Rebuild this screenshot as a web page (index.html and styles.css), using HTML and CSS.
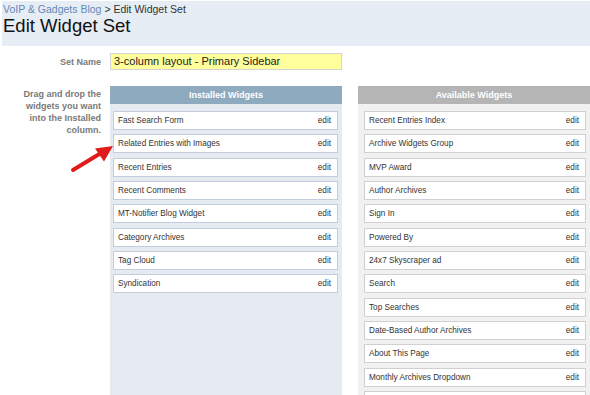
FILE: index.html
```html
<!DOCTYPE html>
<html>
<head>
    <meta charset="UTF-8">
    <title>Edit Widget Set</title>
    <link rel="stylesheet" href="styles.css">
</head>
<body>
    <div class="header">
        <div class="crumbs"><a href="#">VoIP &amp; Gadgets Blog</a> &gt; Edit Widget Set</div>
        <h1>Edit Widget Set</h1>
    </div>

    <div class="form">
        <div class="label">Set Name</div>
        <div class="set-name">3-column layout - Primary Sidebar</div>
        <div></div>

        <div class="label hint">Drag and drop the widgets you want into the Installed column.</div>

        <div class="column installed">
            <div class="column-head">Installed Widgets</div>
            <ul class="widgets">
                <li><span>Fast Search Form</span><a href="#">edit</a></li>
                <li><span>Related Entries with Images</span><a href="#">edit</a></li>
                <li><span>Recent Entries</span><a href="#">edit</a></li>
                <li><span>Recent Comments</span><a href="#">edit</a></li>
                <li><span>MT-Notifier Blog Widget</span><a href="#">edit</a></li>
                <li><span>Category Archives</span><a href="#">edit</a></li>
                <li><span>Tag Cloud</span><a href="#">edit</a></li>
                <li><span>Syndication</span><a href="#">edit</a></li>
            </ul>
        </div>

        <div class="column available">
            <div class="column-head">Available Widgets</div>
            <ul class="widgets">
                <li><span>Recent Entries Index</span><a href="#">edit</a></li>
                <li><span>Archive Widgets Group</span><a href="#">edit</a></li>
                <li><span>MVP Award</span><a href="#">edit</a></li>
                <li><span>Author Archives</span><a href="#">edit</a></li>
                <li><span>Sign In</span><a href="#">edit</a></li>
                <li><span>Powered By</span><a href="#">edit</a></li>
                <li><span>24x7 Skyscraper ad</span><a href="#">edit</a></li>
                <li><span>Search</span><a href="#">edit</a></li>
                <li><span>Top Searches</span><a href="#">edit</a></li>
                <li><span>Date-Based Author Archives</span><a href="#">edit</a></li>
                <li><span>About This Page</span><a href="#">edit</a></li>
                <li><span>Monthly Archives Dropdown</span><a href="#">edit</a></li>
                <li></li>
            </ul>
        </div>
    </div>

    <!-- annotation arrow pointing at the second installed widget -->
    <svg class="arrow" width="60" height="50" viewBox="60 125 60 50">
        <line x1="73" y1="170" x2="101" y2="153" stroke="#e01b1b" stroke-width="4" stroke-linecap="round"/>
        <polygon points="113,146 95,148.5 104,161.5" fill="#e01b1b"/>
    </svg>
</body>
</html>
```

FILE: styles.css
```css
html, body {
    overflow: hidden;
}

body {
    font-family: "Liberation Sans", Arial, sans-serif;
    margin: 0;
    padding-top: 1px;
    position: relative;
    color: #333;
}

.header {
    background: #e7edf5;
    height: 45px;
    margin-left: 2px;
    padding: 2px 0 0 1px;
    box-sizing: border-box;
}

.crumbs {
    font-size: 10.5px;
    line-height: 12px;
    color: #333;
}

.crumbs a {
    color: #5f8ab8;
    text-decoration: none;
}

h1 {
    font-size: 18.5px;
    font-weight: normal;
    color: #111;
    margin: 0;
    line-height: 22px;
}

.form {
    display: grid;
    grid-template-columns: 101px 232px 239px;
    column-gap: 9px;
    row-gap: 16px;
    margin-top: 7px;
}

.label {
    text-align: right;
    font-size: 9px;
    font-weight: bold;
    color: #7a7a7a;
    align-self: center;
}

.label.hint {
    align-self: start;
    line-height: 12px;
    padding: 2px 0 0 20px;
}

.set-name {
    background: #ffff9c;
    border: 1px solid #d4d4d4;
    height: 17px;
    box-sizing: border-box;
    font-size: 11px;
    line-height: 15px;
    padding-left: 3px;
    color: #222;
}

.column {
    min-height: 308px;
}

.installed {
    background: #e6ebf2;
}

.available {
    background: #f1f1f1;
    margin-left: 7px;
}

.column-head {
    height: 18px;
    line-height: 18px;
    text-align: center;
    font-size: 9px;
    font-weight: bold;
    color: #fff;
}

.installed .column-head {
    background: #8eaabe;
}

.available .column-head {
    background: #b5b5b5;
}

.widgets {
    list-style: none;
    margin: 0;
    padding: 7px 4px 0 3px;
    display: flex;
    flex-direction: column;
    gap: 4.35px;
}

.available .widgets {
    padding-left: 6px;
}

.widgets li {
    display: flex;
    justify-content: space-between;
    align-items: center;
    height: 19px;
    box-sizing: border-box;
    background: #fff;
    border: 1px solid #c2cedd;
    padding: 0 6px 0 4px;
    font-size: 8.2px;
    color: #333;
}

.available .widgets li {
    border-color: #d0d0d0;
}

.widgets a {
    color: #333;
    text-decoration: none;
}

.arrow {
    position: absolute;
    left: 60px;
    top: 125px;
}
```
